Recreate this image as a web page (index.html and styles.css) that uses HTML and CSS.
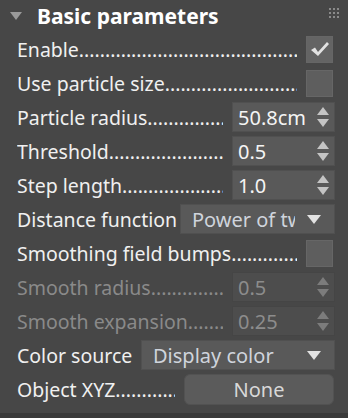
FILE: index.html
```html
<!DOCTYPE html>
<html lang="en">
<head>
    <meta charset="UTF-8">
    <title>Basic parameters</title>
    <link rel="stylesheet" href="styles.css">
</head>
<body>
    <div class="panel">
        <div class="panel-header">
            <span class="caret"></span>
            <h1>Basic parameters</h1>
            <span class="grip">
                <i></i><i></i><i></i><i></i><i></i><i></i><i></i><i></i><i></i>
            </span>
        </div>

        <div class="row">
            <span class="label dots">Enable</span>
            <span class="check checked">
                <svg width="20" height="18" viewBox="0 0 20 18"><path d="M1 10 L5 7.5 L8 12 L17 2 L19 4 L8 16 Z" fill="#e2e2e2"/></svg>
            </span>
        </div>
        <div class="row">
            <span class="label dots">Use particle size</span>
            <span class="check"></span>
        </div>
        <div class="row">
            <span class="label dots">Particle radius</span>
            <span class="spinner"><span class="value">50.8cm</span><span class="arrows"><b class="up"></b><b class="down"></b></span></span>
        </div>
        <div class="row">
            <span class="label dots">Threshold</span>
            <span class="spinner"><span class="value">0.5</span><span class="arrows"><b class="up"></b><b class="down"></b></span></span>
        </div>
        <div class="row">
            <span class="label dots">Step length</span>
            <span class="spinner"><span class="value">1.0</span><span class="arrows"><b class="up"></b><b class="down"></b></span></span>
        </div>
        <div class="row">
            <span class="label">Distance function</span>
            <span class="dropdown dist"><span class="choice">Power of two</span><b class="drop-arrow"></b></span>
        </div>
        <div class="row">
            <span class="label dots">Smoothing field bumps</span>
            <span class="check"></span>
        </div>
        <div class="row disabled">
            <span class="label dots">Smooth radius</span>
            <span class="spinner"><span class="value">0.5</span><span class="arrows"><b class="up"></b><b class="down"></b></span></span>
        </div>
        <div class="row disabled">
            <span class="label dots">Smooth expansion</span>
            <span class="spinner"><span class="value">0.25</span><span class="arrows"><b class="up"></b><b class="down"></b></span></span>
        </div>
        <div class="row">
            <span class="label">Color source</span>
            <span class="dropdown color"><span class="choice">Display color</span><b class="drop-arrow"></b></span>
        </div>
        <div class="row">
            <span class="label dots">Object XYZ</span>
            <span class="button">None</span>
        </div>
    </div>
</body>
</html>
```

FILE: styles.css
```css
body {
    margin: 0;
    background: #3a3a3a;
    font-family: 'Noto Sans', 'Open Sans', sans-serif;
    color: #f0f0f0;
}

.panel {
    background-color: #474747;
    height: 413px;
    padding: 0 13px 0 17px;
    box-sizing: border-box;
}

.panel-header {
    height: 32px;
    display: flex;
    align-items: center;
    position: relative;
}

.caret {
    width: 0;
    height: 0;
    margin-left: -7px;
    border-left: 6px solid transparent;
    border-right: 6px solid transparent;
    border-top: 8px solid #9a9a9a;
}

h1 {
    margin: 0 0 0 15px;
    font-size: 21px;
    font-weight: 700;
    color: #ffffff;
    line-height: 1;
}

.grip {
    position: absolute;
    right: -4px;
    top: 8px;
    width: 10px;
    display: flex;
    flex-wrap: wrap;
    gap: 2px;
}

.grip i {
    width: 2px;
    height: 2px;
    background: #8a8a8a;
}

.row {
    height: 34px;
    display: flex;
    align-items: center;
    gap: 9px;
}

.label {
    flex: 1;
    min-width: 0;
    font-size: 19.5px;
    white-space: nowrap;
    overflow: hidden;
}

.dots::after {
    content: "............................................................................";
}

.check {
    width: 27px;
    height: 27px;
    margin-right: 2px;
    box-sizing: border-box;
    background: #5e5e5e;
    border: 1px solid #666;
    display: flex;
    align-items: center;
    justify-content: center;
}

.checked {
    background: #646464;
}

.spinner {
    width: 103px;
    height: 30px;
    box-sizing: border-box;
    background: #595959;
    border: 1px solid #505050;
    display: flex;
    align-items: center;
    padding: 0 5px 0 5px;
}

.value {
    flex: 1;
    font-size: 20px;
    color: #f4f4f4;
}

.arrows {
    display: flex;
    flex-direction: column;
    gap: 4px;
}

.arrows b {
    width: 0;
    height: 0;
    border-left: 6px solid transparent;
    border-right: 6px solid transparent;
}

.arrows .up {
    border-bottom: 8px solid #c4c4c4;
}

.arrows .down {
    border-top: 8px solid #c4c4c4;
}

.dropdown {
    height: 30px;
    box-sizing: border-box;
    background: #595959;
    border: 1px solid #505050;
    display: flex;
    align-items: center;
    padding: 0 13px 0 11px;
    gap: 12px;
}

.dist {
    width: 155px;
}

.color {
    width: 194px;
}

.label + .dropdown {
    margin-left: -8px;
}

.choice {
    flex: 1;
    min-width: 0;
    overflow: hidden;
    white-space: nowrap;
    font-size: 20px;
    color: #cfd4dc;
}

.drop-arrow {
    width: 0;
    height: 0;
    border-left: 7px solid transparent;
    border-right: 7px solid transparent;
    border-top: 9px solid #e2e2e2;
}

.button {
    width: 150px;
    height: 31px;
    box-sizing: border-box;
    background: #5b5b5b;
    border: 1px solid #525252;
    border-radius: 6px;
    font-size: 20px;
    color: #d8d8d8;
    display: flex;
    align-items: center;
    justify-content: center;
    margin-right: 1px;
}

.disabled .label {
    color: #8a8a8a;
}

.disabled .spinner {
    background: #4d4d4d;
    border-color: #454545;
}

.disabled .value {
    color: #8c8c8c;
}

.disabled .arrows .up {
    border-bottom-color: #7c7c7c;
}

.disabled .arrows .down {
    border-top-color: #7c7c7c;
}
```
